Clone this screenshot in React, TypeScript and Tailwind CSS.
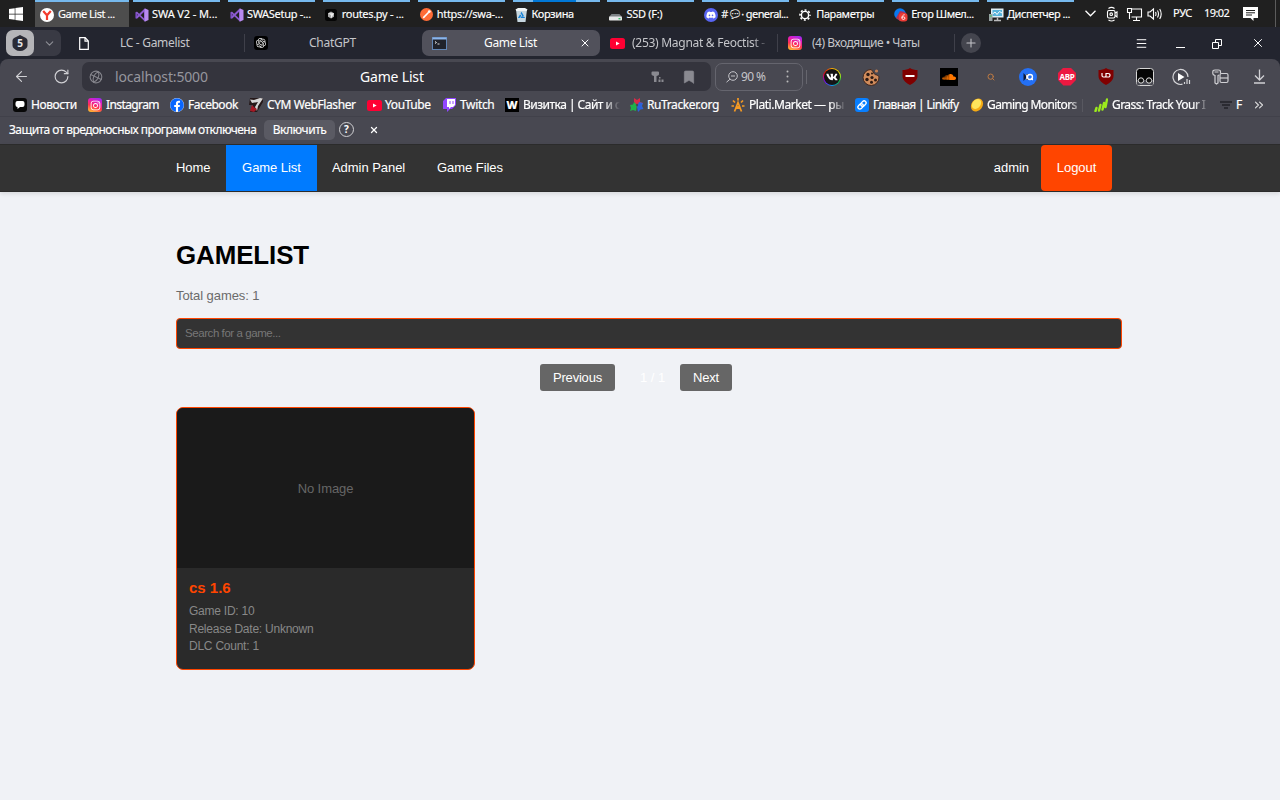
import React from "react";
import {
  ArrowLeft, Bookmark, ChevronDown, ChevronsRight, Globe, Menu, Plus, RotateCw, Search, X,
} from "lucide-react";
import { FaDiscord, FaFacebook, FaInstagram, FaSoundcloud, FaVk, FaWindows } from "react-icons/fa";
import { RiOpenaiFill } from "react-icons/ri";

type Kids = { children?: React.ReactNode };

function Insta() {
  return (
    <span className="flex size-[14px] shrink-0 items-center justify-center rounded-[3px] bg-[linear-gradient(20deg,#ffc02e_5%,#ff3050_40%,#e01cc0_70%,#8a30ff)] text-white">
      <FaInstagram size={11} />
    </span>
  );
}

function Tube() {
  return (
    <svg width="15" height="11" viewBox="0 0 15 11" className="shrink-0">
      <rect width="15" height="11" rx="2.5" fill="#ff0033" />
      <path d="M6 3.4v4.2l3.6-2.1z" fill="#fff" />
    </svg>
  );
}

function VisualStudio() {
  return (
    <svg width="14" height="14" viewBox="0 0 14 14" className="shrink-0">
      <path d="M1.3 4.2v5.6l8.4-8" fill="none" stroke="#7a4bc0" strokeWidth="1.8" strokeLinejoin="round" />
      <path d="M1.3 4.2l8.6 8.2V1.6L1.6 9.9" fill="none" stroke="#8c5bd0" strokeWidth="1.7" strokeLinejoin="round" />
      <path d="M9.6.3 13.5 2v10l-3.9 1.7z" fill="#b78af0" />
    </svg>
  );
}

function Yandex() {
  return (
    <svg width="14" height="14" viewBox="0 0 14 14" className="shrink-0">
      <circle cx="7" cy="7" r="7" fill="#fff" />
      <path d="M3.2 3 7 7.3 10.8 3M7 7v5" fill="none" stroke="#f33b2c" strokeWidth="2.2" />
    </svg>
  );
}

function Cursor() {
  return (
    <svg width="12" height="12" viewBox="0 0 12 12" className="shrink-0">
      <rect width="12" height="12" rx="2.5" fill="#050505" />
      <path d="M6 2.500 9 4.200v3.600L6 9.500 3 7.800V4.200z" fill="#aaa" />
      <path d="M3 4.200h6L6 9.500V6z" fill="#eee" />
    </svg>
  );
}

function Postman() {
  return (
    <svg width="13" height="13" viewBox="0 0 13 13" className="shrink-0">
      <circle cx="6.5" cy="6.5" r="6.5" fill="#ff6c37" />
      <path d="M3.2 9.9 8.7 4.2" stroke="#fff" strokeWidth="1.6" />
      <circle cx="9.3" cy="3.6" r="1.4" fill="#fff" />
    </svg>
  );
}

function Bin() {
  return (
    <svg width="13" height="14" viewBox="0 0 13 14" className="shrink-0">
      <path d="M1 1.5h11L10.5 14h-8z" fill="#c6d6df" />
      <path d="M.5 1.5 3 0h7l2.5 1.5-1 1.5h-10z" fill="#f0f4f6" />
      <path d="M6.500 5.200 8.800 9.300H4.200z" stroke="#1380d8" strokeWidth="1.500" strokeDasharray="3.400 1" fill="none" />
    </svg>
  );
}

function Drive() {
  return (
    <svg width="13" height="14" viewBox="0 0 13 14" className="shrink-0">
      <path d="M2.5 6h8L13 9H0z" fill="#7c8184" />
      <rect y="8.5" width="13" height="4" rx=".8" fill="#e6e8e8" />
      <path d="M9.5 10.7h2" stroke="#2ebd61" strokeWidth="1.3" />
    </svg>
  );
}

function Discord() {
  return (
    <span className="flex size-[14px] shrink-0 items-center justify-center rounded-full bg-[#5865f2] text-white">
      <FaDiscord size={10} />
    </span>
  );
}

function Gear() {
  return (
    <svg width="12" height="12" viewBox="0 0 12 12" fill="none" stroke="#fff" className="shrink-0">
      <circle cx="6" cy="6" r="3.600" strokeWidth="1.400" />
      <circle cx="6" cy="6" r="5" strokeWidth="1.600" strokeDasharray="1.960 1.960" strokeDashoffset="1" />
    </svg>
  );
}

function Caller() {
  return (
    <svg width="14" height="14" viewBox="0 0 14 14" className="shrink-0">
      <circle cx="6" cy="6" r="5.8" fill="#0878f0" />
      <path d="M2 10 6 3l5 1-5 9z" fill="#b43050" />
      <rect x="5" y="5" width="8.500" height="8.500" rx="3" fill="#eb3b35" />
      <path d="M10.600 6.700C8.600 7 7.800 8.500 7.900 10.200c.2 1.700 3 1.700 3 0S8.600 8.500 8 9.800" stroke="#fff" strokeWidth=".9" fill="none" />
    </svg>
  );
}

function TaskMgr() {
  return (
    <svg width="15" height="14" viewBox="0 0 15 14" className="shrink-0">
      <rect x="2" y=".5" width="12.500" height="9" fill="#dfeef5" />
      <rect x="3.500" y="2" width="9.500" height="6" fill="#58b4dc" />
      <path d="m3.500 6 2.500-2 2 2.500 2.500-3L13 5" stroke="#fff" fill="none" />
      <path d="M5 12.500h7M8.500 9.500v3" stroke="#bbb" strokeWidth="1.500" />
      <rect y="6" width="3.500" height="7" fill="#9aa3a5" />
      <path d="M.8 8h2" stroke="#35d058" />
    </svg>
  );
}

const tasks = [
  { icon: <VisualStudio />, label: "SWA V2 - M...", cls: "tracking-[-0.1px]" },
  { icon: <VisualStudio />, label: "SWASetup -...", cls: "tracking-[-0.3px]" },
  { icon: <Cursor />, label: "routes.py - ...", cls: "tracking-[-0.3px]" },
  { icon: <Postman />, label: "https://swa-...", cls: "tracking-[-0.28px]" },
  { icon: <Bin />, label: "Корзина", cls: "tracking-[-0.4px]", bar: "bg-[linear-gradient(90deg,#76b9ed_23%,#0078d7_23%,#0078d7_72%,#76b9ed_72%)]" },
  { icon: <Drive />, label: "SSD (F:)", cls: "tracking-[-0.3px]" },
  { icon: <Discord />, label: "#💬︎· general...", cls: "tracking-[-0.6px]" },
  { icon: <Gear />, label: "Параметры", cls: "tracking-[-0.4px]" },
  { icon: <Caller />, label: "Егор Шмел...", cls: "tracking-[-0.45px]" },
  { icon: <TaskMgr />, label: "Диспетчер ...", cls: "ml-px tracking-[-0.45px]" },
];

function Taskbar() {
  return (
    <div className="flex h-[27px] bg-[#202020] text-[11px] text-white [-webkit-text-stroke:0.15px_#fff]">
      <div className="flex w-[35px] items-center pl-2"><FaWindows size={16} /></div>
      <div className="mr-1 flex w-[94px] items-center border-t-2 border-[#76b9ed] bg-[#4d4d4d] pl-[5px]">
        <Yandex />
        <span className="ml-1 whitespace-nowrap tracking-[-0.5px]">Game List ...</span>
      </div>
      <div className="flex gap-[7.900px]">
        {tasks.map((t) => (
          <div key={t.label} className="flex w-[87px] flex-col">
            <div className={"h-[2px] shrink-0 " + (t.bar ?? "bg-[#76b9ed]")} />
            <div className="flex flex-1 items-center pl-[2px]">
              <span className="flex w-[17px] shrink-0">{t.icon}</span>
              <span className={"whitespace-nowrap " + t.cls}>{t.label}</span>
            </div>
          </div>
        ))}
      </div>
      <div className="flex flex-1 items-center pl-[11px]">
        <svg width="11" height="7" viewBox="0 0 11 7" className="mr-[10px] shrink-0" fill="none" stroke="#fff" strokeWidth="1.300"><path d="m.5.800 5 5 5-5" /></svg>
        <svg width="20" height="16" viewBox="0 0 20 16" className="shrink-0" fill="none" stroke="#fff" strokeWidth="1.100">
          <rect x="1.500" y="4.500" width="7.500" height="7.500" rx="1.500" /><path d="m9 7 2-1v5L9 9.500M2.500 2.500c2-1.500 4-1.500 6 0M2.500 14c2 1.300 4 1.300 6 0" /><circle cx="5.200" cy="8.200" r="1.300" />
        </svg>
        <svg width="21" height="16" viewBox="0 0 21 16" className="shrink-0" fill="none" stroke="#fff" strokeWidth="1.100">
          <path d="M5.500 3h10v8H5.500M7 14.500h7M10.500 11v3.500" /><path d="M1.500 2.500h4v4h-4zM3.500 6.500V13" />
        </svg>
        <svg width="16" height="14" viewBox="0 0 16 14" className="mr-[10px] shrink-0" fill="none" stroke="#fff" strokeWidth="1.100">
          <path d="M1 5h2l3.500-3v10L3 9H1zM8.500 5q1 2 0 4M10.500 3.500q2 3.500 0 7M12.700 2q3 5 0 10" />
        </svg>
        <span className="w-[31px] tracking-[-0.300px]">РУС</span>
        <span className="w-[39px] tracking-[-0.600px]">19:02</span>
        <svg width="15" height="14" viewBox="0 0 15 14" className="shrink-0">
          <path d="M0 0h15v11H10.500v3L7.500 11H0z" fill="#fff" />
          <path d="M3 3.500h9M3 5.800h9M3 8h6" stroke="#202020" strokeWidth="1" />
        </svg>
      </div>
      <div className="w-[5px] border-l border-[#5c5c5c]" />
    </div>
  );
}

function TabBar() {
  return (
    <div className="flex h-[32px] items-center bg-[#23252f] text-[12px] text-[#c5c6ca]">
      <div className="ml-[6px] flex h-[26px] w-[55px] rounded-[7px] bg-[#393a44]">
        <div className="flex w-[28px] items-center justify-center rounded-[7px] bg-[#b5b5b8]">
          <svg width="16" height="16" viewBox="0 0 16 16" className="shrink-0">
            <path d="M8 0 14 3q1.500 1 1.500 2.500v5q0 2-1.500 3l-2 1.500q-1 1-4 1t-4-1l-2-1.500q-1.500-1-1.500-3v-5Q.5 4 2 3z" fill="#2a2b35" />
            <text x="8" y="11.700" textAnchor="middle" fontSize="10" fontWeight="700" fill="#e6e6e8">5</text>
          </svg>
        </div>
        <div className="flex flex-1 items-center justify-center pl-[3px] text-[#8e8f96]"><ChevronDown size={13} /></div>
      </div>
      <div className="flex w-[183px] items-center pl-[18px]">
        <svg width="10" height="13" viewBox="0 0 10 13" fill="none" stroke="#fff" strokeWidth="1.200"><path d="M.700.700h5.500L9.300 4v8.300H.700zM6 .700V4.200h3.300" /></svg>
        <span className="ml-[31px] whitespace-nowrap tracking-[-0.300px]">LC - Gamelist</span>
      </div>
      <div className="flex w-[178px] items-center">
        <span className="h-[18px] w-px bg-[#3f404a]" />
        <span className="ml-[9px] flex size-[14px] items-center justify-center rounded-[3px] bg-black text-white"><RiOpenaiFill size={12} /></span>
        <span className="ml-[41px] tracking-[-0.250px]">ChatGPT</span>
      </div>
      <div className="flex h-[26px] w-[178px] items-center rounded-[7px] bg-[#51515b] pl-[10px] text-white">
        <svg width="15" height="13" viewBox="0 0 15 13"><rect x=".5" y=".5" width="14" height="12" fill="#20232b" stroke="#6186b5" /><path d="M.5 1.500h14" stroke="#8cb5ea" strokeWidth="2" /><path d="m3 4.500 1.500 1L3 6.500M5.500 7h2" stroke="#ddd" fill="none" /></svg>
        <span className="ml-[37px] w-[95px] whitespace-nowrap tracking-[-0.350px]">Game List</span>
        <X size={12} strokeWidth={2} />
      </div>
      <div className="flex w-[178px] items-center pl-[10px]">
        <Tube />
        <span className="ml-[7px] w-[137px] whitespace-nowrap tracking-[-0.280px] [mask-image:linear-gradient(90deg,#000_88%,transparent)]">(253) Magnat &amp; Feoctist -</span>
        <span className="ml-[8px] h-[18px] w-px bg-[#3f404a]" />
      </div>
      <div className="flex w-[178px] items-center pl-[10px]">
        <Insta />
        <span className="ml-[10px] w-[142px] whitespace-nowrap tracking-[-0.480px]">(4) Входящие • Чаты</span>
        <span className="h-[18px] w-px bg-[#3f404a]" />
      </div>
      <div className="ml-[5px] flex size-[20px] items-center justify-center rounded-full bg-[#44454e]"><Plus size={14} strokeWidth={1.800} /></div>
      <div className="ml-[154px] flex w-[130px] items-center justify-between text-white">
        <Menu size={13} strokeWidth={1.800} />
        <span className="mt-[9px] h-px w-[9px] bg-white" />
        <svg width="11" height="11" viewBox="0 0 11 11" fill="none" stroke="#fff"><path d="M.5 4.500h6v6h-6zM3.500 4.500v-3h6v6h-3" /></svg>
        <X size={14} strokeWidth={1.700} />
      </div>
    </div>
  );
}

function Slot({ w, children }: Kids & { w: string }) {
  return <div className={"flex shrink-0 items-center justify-center " + w}>{children}</div>;
}

function Shield({ children }: Kids) {
  return (
    <svg width="16" height="17" viewBox="0 0 16 17">
      <path d="M8 0c2 1.500 5 2 7.500 2v6c0 4.500-4 7-7.500 9C4.500 15 .5 12.500.5 8V2C3 2 6 1.500 8 0z" fill="#800000" />
      {children}
    </svg>
  );
}

function CookieMark() {
  return (
    <svg width="18" height="18" viewBox="0 0 18 18">
      <path d="M9 1.500c1 0 1 2 2.500 2.500 0 2 2 3 3.500 3 .5 1 2 .5 2 2a8 8 0 1 1-8-7.500z" fill="#d08b5b" stroke="#40281e" strokeWidth="1" />
      <g fill="#2c1a14"><circle cx="6" cy="6.500" r="1.700" /><circle cx="5" cy="11.500" r="1.700" /><circle cx="10" cy="9.500" r="1.600" /><circle cx="9.500" cy="14.300" r="1.500" /><circle cx="13.500" cy="12" r="1.500" /><circle cx="14.500" cy="3" r="1.600" fill="#c57f52" /><circle cx="10" cy="5.500" r="1" /></g>
    </svg>
  );
}

function Toolbar() {
  return (
    <div className="bg-[#23252f]">
      <div className="flex h-[35px] items-center rounded-t-[8px] bg-[#484851] text-[#d0d0d4]">
        <Slot w="w-[42px]"><ArrowLeft size={17} strokeWidth={1.600} /></Slot>
        <Slot w="w-[38px]"><RotateCw size={17} strokeWidth={1.600} /></Slot>
        <div className="ml-[2px] flex h-[29px] w-[629px] items-center rounded-[7px] bg-[#34343d]">
          <Globe size={14} strokeWidth={1.800} className="ml-[7px] rotate-[25deg] text-[#85858c]" />
          <span className="ml-[12px] w-[245px] text-[14px] tracking-[-0.150px] text-[#96969d]">localhost:5000</span>
          <span className="w-[291px] text-[14px] tracking-[-0.180px] text-white">Game List</span>
          <svg width="13" height="12" viewBox="0 0 13 12" fill="#8a8a91"><path d="M.500 1.500Q.500.500 1.500.500H7q1 0 1 1V3q0 1-1 1.500L5.500 5v6H3V5L1.500 4.500Q.500 4 .500 3z" /><path d="M7 6h2.500v1.500h3V6M7.500 8.500h2v2.500h-2zM10.500 8.500h2v2.500h-2zM8 6h4.500v1.500H8z" /></svg>
          <Bookmark size={16} strokeWidth={1} fill="#8a8a91" className="ml-[17px] text-[#8a8a91]" />
        </div>
        <div className="ml-[4px] flex h-[28px] w-[88px] items-center rounded-[7px] border border-[#65656e] text-[12px] text-[#c5c5ca]">
          <svg width="12" height="12" viewBox="0 0 12 12" className="ml-[10px]" fill="none" stroke="#c5c5ca"><circle cx="7" cy="5" r="4.300" /><path d="m4 8.200-3.500 3M5 5h4" /></svg>
          <span className="ml-[3px] w-[45px] tracking-[-0.650px]">90 %</span>
          <svg width="3" height="13" viewBox="0 0 3 13" fill="#bbb"><circle cx="1.500" cy="1.500" r="1" /><circle cx="1.500" cy="6.500" r="1" /><circle cx="1.500" cy="11.500" r="1" /></svg>
        </div>
        <span className="ml-[3px] h-[14px] w-px bg-[#66666e]" />
        <div className="ml-[5px] flex">
          <Slot w="w-[39px]"><span className="flex size-[18px] items-center justify-center rounded-full bg-[conic-gradient(#fa0,#ff0,#0c4,#09f,#80f,red,#fa0)]"><span className="flex size-[16px] items-center justify-center rounded-full bg-[#151515] text-white"><FaVk size={12} /></span></span></Slot>
          <Slot w="w-[40px]"><CookieMark /></Slot>
          <Slot w="w-[38px]"><Shield><path d="M3.500 8h9" stroke="#fff" strokeWidth="2" /></Shield></Slot>
          <Slot w="w-[40px]"><span className="flex size-[18px] items-center justify-center bg-black text-[#f70]"><FaSoundcloud size={14} /></span></Slot>
          <Slot w="w-[44px]"><Search size={8} strokeWidth={3} className="text-[#bd7a43]" /></Slot>
          <Slot w="w-[29px]">
            <svg width="18" height="18" viewBox="0 0 18 18"><circle cx="9" cy="9" r="9" fill="#2470f5" /><path d="M4.500 5v8L8 9zM7 6h2v6H7z" fill="#0b1633" /><circle cx="11" cy="9" r="2.500" fill="none" stroke="#fff" strokeWidth="1.300" /><path d="m12 10 1.800 2M7.800 6.500v5" stroke="#fff" strokeWidth="1.200" /></svg>
          </Slot>
          <Slot w="w-[50px]"><span className="flex size-[18px] items-center justify-center bg-[#ec1941] text-[8px] font-bold tracking-[-0.300px] text-white [clip-path:polygon(30%_0,70%_0,100%_30%,100%_70%,70%_100%,30%_100%,0_70%,0_30%)]">ABP</span></Slot>
          <Slot w="w-[27px]"><Shield><path d="M4 5v2.500q0 1.500 1.500 1.500H7q1 0 1-1V5.500h2q2 0 2 1.800T10 9H8" stroke="#fff" strokeWidth="1.200" fill="none" /></Shield></Slot>
          <Slot w="w-[51px]">
            <svg width="18" height="18" viewBox="0 0 18 18"><rect x=".5" y=".5" width="17" height="17" rx="3" fill="#050505" stroke="#d5d5d5" /><path d="M1 12h16v4q0 1-1 1H2q-1 0-1-1z" fill="#484851" /><circle cx="5" cy="12.500" r="2.700" fill="#111" stroke="#ddd" /><circle cx="13" cy="12.500" r="2.700" fill="#111" stroke="#ddd" /></svg>
          </Slot>
          <Slot w="w-[23px]">
            <svg width="19" height="18" viewBox="0 0 19 18"><path d="M10.500 16.200A7.500 7.500 0 1 1 16 9" fill="none" stroke="#d5d5d8" strokeWidth="1.200" /><path d="M6 5v8l6.500-4z" fill="#fff" /><path d="M12.500 16v-2M15 16v-5M17.500 16v-4" stroke="#d5d5d8" strokeWidth="1.200" /></svg>
          </Slot>
          <Slot w="w-[54px]">
            <svg width="17" height="16" viewBox="0 0 17 16" fill="none" stroke="#d0d0d4" strokeWidth="1.200"><path d="M8.500 4.500V3Q8.500 1 6.500 1H3Q.800 1 .800 3v1.500Q.800 6 3 6.500V14l1.500 1L6 14V6.500l1-.5M2.500 3h4" /><rect x="8" y="4.500" width="8" height="9" rx="1.500" /><path d="M8 9h8" /></svg>
          </Slot>
          <Slot w="w-[24px]">
            <svg width="13" height="15" viewBox="0 0 13 15" fill="none" stroke="#d0d0d4" strokeWidth="1.300"><path d="M6.500.5v10M2 6.500l4.500 4.500L11 6.500M1 14h11" /></svg>
          </Slot>
        </div>
      </div>
    </div>
  );
}

const marks = [
  { w: "w-[75px]", t: "Новости", c: "tracking-[-0.450px]", i: <svg width="14" height="14" viewBox="0 0 14 14"><rect width="14" height="14" rx="3" fill="#080808" /><path d="M4.500 3h5q2 0 2 2v2q0 2-2 2H7l-2.500 2V9q-2 0-2-2V5q0-2 2-2z" fill="#fff" /></svg> },
  { w: "w-[82px]", t: "Instagram", c: "tracking-[-0.600px]", i: <Insta /> },
  { w: "w-[79px]", t: "Facebook", c: "tracking-[-0.500px]", i: <span className="rounded-full bg-white text-[#0866ff]"><FaFacebook size={14} /></span> },
  { w: "w-[118px]", t: "CYM WebFlasher", c: "tracking-[-0.420px]", i: <svg width="14" height="14" viewBox="0 0 14 14"><path d="M1 0h13v4L8 14H1l3-7H0z" fill="#25191a" /><path d="M1 1.500 5 2l6-2 3 .500L9 8l-1 5-2-4 3-5-6 1z" fill="#d5d5d5" /><path d="m1 13 2-6 3 3 2 1-3 3z" fill="#a31925" /></svg> },
  { w: "w-[76px]", t: "YouTube", c: "tracking-[-0.400px]", i: <Tube /> },
  { w: "w-[62px]", t: "Twitch", c: "ml-[-1px] tracking-[-0.350px]", i: <svg width="13" height="14" viewBox="0 0 13 14"><path d="M3 0h10v7l-4 4H7l-3 3v-3H0V3z" fill="#9146ff" /><path d="M4 1h8v6l-2 2H8L6 11V9H4z" fill="#fff" /><path d="M7 3v3M10 3v3" stroke="#9146ff" /></svg> },
  { w: "w-[125px]", t: "Визитка | Сайт и с", fade: true, c: "tracking-[-0.520px]", i: <span className="flex size-[14px] items-center justify-center bg-black text-[11px] font-extrabold">W</span> },
  { w: "w-[101px]", t: "RuTracker.org", c: "ml-[-1px] tracking-[-0.400px]", i: <svg width="14" height="14" viewBox="0 0 14 14"><path d="M4 0 7 2l3-2v4l3 1-2 3-5-1-2-3z" fill="#d92b48" /><path d="m9 4 4 1-1 3 1.500 3-3 .500L8 14l-1-5z" fill="#2c62d9" /><path d="m4 4 3 3-1 6-3-1-3 1 1-3-1-3 3-.500z" fill="#21b34a" /><circle cx="7" cy="7" r="1.200" fill="#484851" /></svg> },
  { w: "w-[124px]", t: "Plati.Market — ры", fade: true, c: "tracking-[-0.450px]", i: <svg width="14" height="14" viewBox="0 0 14 14" fill="none" stroke="#f59a23" strokeWidth="1.700"><path d="m3.500 13.500 3.500-9 3.500 9M5 10.500 7 9l2 1.500M7 0v2.500M2 2.500l2 2M12 2.500l-2 2M.500 8h2.500M11 8h2.500" /></svg> },
  { w: "w-[115px]", t: "Главная | Linkify", c: "tracking-[-0.650px]", i: <svg width="14" height="14" viewBox="0 0 14 14"><rect width="14" height="14" rx="3" fill="#087fff" /><g transform="rotate(-45 7 7)" fill="none" stroke="#fff" strokeWidth="1.300"><rect x="2" y="5" width="6" height="4" rx="2" /><rect x="6" y="5" width="6" height="4" rx="2" /></g></svg> },
  { w: "w-[124px]", t: "Gaming Monitors |", fade: true, c: "ml-[-1px] tracking-[-0.600px]", i: <svg width="14" height="14" viewBox="0 0 14 14"><ellipse cx="7" cy="7" rx="5.500" ry="7" transform="rotate(38 7 7)" fill="#f5aa14" /><ellipse cx="6.500" cy="6" rx="4" ry="5.500" transform="rotate(38 6.500 6)" fill="#ffe45c" /></svg> },
  { w: "w-[126px]", t: "Grass: Track Your I", fade: true, c: "tracking-[-0.550px]", i: <svg width="14" height="14" viewBox="0 0 14 14" stroke="#9cea1c" strokeWidth="2.400" strokeLinecap="round"><path d="m1.500 13 1-3M5 12.500 6.500 7M8.500 11.500 10 5M11.500 9 13 1.500" /></svg> },
];

function Bookmarks() {
  return (
    <div className="flex h-[22px] items-center overflow-hidden bg-[#484851] pl-[13px] text-[12px] text-white [-webkit-text-stroke:0.2px_#fff]">
      {marks.map((m) => (
        <div key={m.t} className={"flex shrink-0 items-center " + m.w}>
          <span className="mr-[3px] flex w-[15px] shrink-0">{m.i}</span>
          <span className={"whitespace-nowrap " + m.c + (m.fade ? " w-[97px] [mask-image:linear-gradient(90deg,#000_84%,transparent)]" : "")}>{m.t}</span>
        </div>
      ))}
      <svg width="12" height="8" viewBox="0 0 12 8" stroke="#222228" strokeWidth="1.500" className="shrink-0"><path d="M0 1h12M2 4h8M4 7h4" /></svg>
      <span className="ml-[4px] w-[16px]">F</span>
      <ChevronsRight size={14} strokeWidth={1.900} className="shrink-0 text-[#ddd]" />
    </div>
  );
}

function Notice() {
  return (
    <div className="flex h-[28px] items-center border-t border-[#41414a] bg-[#484851] pb-[2px] pl-[9px] text-[12px] text-white">
      <span className="w-[255px] whitespace-nowrap tracking-[-0.560px] [-webkit-text-stroke:0.15px_#fff]">Защита от вредоносных программ отключена</span>
      <span className="flex h-[20px] w-[71px] items-center justify-center rounded-[5px] bg-[#5a5a63] tracking-[-0.450px] [-webkit-text-stroke:0.15px_#fff]">Включить</span>
      <span className="ml-[4px] flex size-[15px] items-center justify-center rounded-full border border-[#d0d0d3] text-[10px] font-bold">?</span>
      <X size={10} strokeWidth={3} className="ml-[15px]" />
    </div>
  );
}

function GamePage() {
  return (
    <div className="flex flex-1 flex-col bg-[#f0f2f6] font-['Liberation_Sans',Arial,sans-serif] text-[13px]">
      <nav className="flex h-[48px] shrink-0 items-center border-y border-[#2b2b2b] bg-[#333] px-[160px] tracking-[-0.050px] text-white shadow-[0_2px_4px_rgba(0,0,0,0.1)]">
        <a className="w-[66px] pl-[16px]">Home</a>
        <a className="flex h-[46px] w-[91px] items-center justify-center bg-[#007bff]">Game List</a>
        <a className="w-[105px] pl-[15px]">Admin Panel</a>
        <a className="flex-1 pl-[15px]">Game Files</a>
        <span className="mr-[12px]">admin</span>
        <a className="mr-[8px] flex h-[46px] w-[71px] items-center justify-center rounded-[4px] bg-[#ff4500]">Logout</a>
      </nav>
      <main className="flex flex-col pr-[158px] pl-[176px]">
        <h1 className="mt-[47px] text-[25.920px] leading-[32px] font-bold tracking-[-0.100px] text-black">GAMELIST</h1>
        <p className="mt-[17px] leading-[16px] tracking-[-0.080px] text-[#6b6b6b]">Total games: 1</p>
        <input className="mt-[14px] h-[31px] rounded-[4px] border border-[#ff4500] bg-[#333] px-[8px] pb-[2px] text-[11.500px] tracking-[-0.430px] text-white placeholder:text-[#777]" placeholder="Search for a game..." />
        <div className="mt-[15px] flex h-[27px] items-center pl-[364px] text-white">
          <button className="h-[27px] w-[75px] rounded-[3px] bg-[#666] pt-px text-[13px] tracking-[-0.200px]">Previous</button>
          <span className="w-[65px] pl-[25px]">1 / 1</span>
          <button className="h-[27px] w-[52px] rounded-[3px] bg-[#666] pt-px text-[13px] tracking-[-0.200px]">Next</button>
        </div>
        <article className="mt-[16px] flex h-[263px] w-[299px] flex-col overflow-hidden rounded-[7px] border border-[#ff4500] bg-[#2a2a2a] text-[12px] tracking-[-0.240px] text-[#888]">
          <div className="flex h-[160px] shrink-0 items-center justify-center bg-[#1a1a1a] pt-px text-[13px] tracking-[-0.080px] text-[#666]">No Image</div>
          <div className="px-[12px] pt-[10px]">
            <h2 className="text-[15px] leading-[20px] font-bold tracking-normal text-[#ff4500]">cs 1.6</h2>
            <p className="mt-[5px] leading-[17.500px]">Game ID: 10</p>
            <p className="leading-[17.500px]">Release Date: Unknown</p>
            <p className="leading-[17.500px]">DLC Count: 1</p>
          </div>
        </article>
      </main>
    </div>
  );
}

export default function App() {
  return (
    <div className="flex h-[800px] w-[1280px] flex-col overflow-hidden font-['Noto_Sans',sans-serif]">
      <Taskbar />
      <TabBar />
      <Toolbar />
      <Bookmarks />
      <Notice />
      <GamePage />
    </div>
  );
}
